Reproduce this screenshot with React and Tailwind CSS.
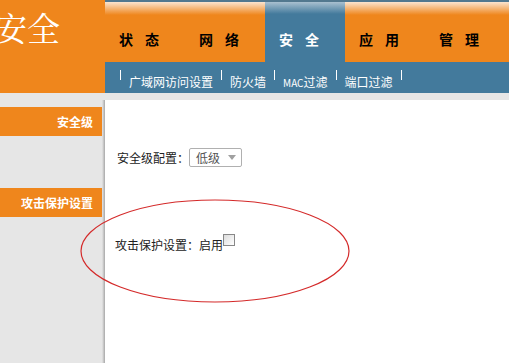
import React from "react";

const tabs = ["状态", "网络", "安全", "应用", "管理"];
const subs = ["广域网访问设置", "防火墙", "MAC过滤", "端口过滤"];

function Tab({ label, active }) {
  return (
    <div
      className={
        "w-[80px] h-full flex items-start justify-center pt-[27px] text-[14px] font-bold tracking-[12px] " +
        (active
          ? "bg-[linear-gradient(to_bottom,#a9c0d0,#437a9c_12px)] text-white"
          : "bg-[linear-gradient(to_bottom,#fbe4cf,#ef861c_13px)] text-black")
      }
    >
      {label}
    </div>
  );
}

function SideItem({ label }) {
  return (
    <div className="h-[29px] bg-[#ef861c] text-white text-[12px] font-bold flex items-center justify-end pr-[9px]">
      {label}
    </div>
  );
}

export default function App() {
  return (
    <div
      className="relative w-[509px] h-[363px] overflow-hidden bg-[#e6e6e6] flex flex-col"
      style={{ fontFamily: '"Noto Sans CJK SC", "Noto Sans", sans-serif' }}
    >
      <div className="h-[93px] flex">
        <div className="w-[105px] bg-[#ef861c] overflow-hidden">
          <div className="text-white text-[33px] leading-none mt-[10px] -ml-[6px] whitespace-nowrap" style={{ fontFamily: '"Noto Serif CJK SC", "Noto Sans CJK SC", serif' }}>
            安全
          </div>
        </div>
        <div className="flex-1 flex flex-col">
          <div className="h-[62px] flex border-t-2 border-[#52788f] bg-[linear-gradient(to_bottom,#fbe4cf,#ef861c_13px)]">
            {tabs.map((t) => (
              <Tab key={t} label={t} active={t === "安全"} />
            ))}
          </div>
          <div className="h-[31px] bg-[#437a9c] flex items-start pl-[15px] pt-[8px] text-white text-[12px]">
            {subs.map((s) => (
              <div key={s} className="flex items-start">
                <div className="w-px h-[10px] bg-white" />
                <span className="px-[8px] mt-[4px] leading-[16px]">
                  {s === "MAC过滤" ? (
                    <>
                      <span className="text-[10px]">MAC</span>过滤
                    </>
                  ) : (
                    s
                  )}
                </span>
              </div>
            ))}
            <div className="w-px h-[10px] bg-white" />
          </div>
        </div>
      </div>
      <div className="flex-1 flex pt-[7px]">
        <div className="w-[102px] flex flex-col">
          <div className="h-[7px]" />
          <SideItem label="安全级" />
          <div className="h-[52px]" />
          <SideItem label="攻击保护设置" />
        </div>
        <div className="w-[3px] bg-[linear-gradient(to_right,#e6e6e6,#a8a8a8)]" />
        <div className="flex-1 bg-white text-[12px] text-[#222]">
          <div className="flex items-center mt-[48px] ml-[12px]">
            <span>安全级配置：</span>
            <div className="w-[53px] h-[19px] border border-[#b0b0b0] rounded-[2px] flex items-center justify-between pl-[6px] pr-[5px] text-[#555]">
              <span>低级</span>
              <svg width="8" height="5" viewBox="0 0 8 5">
                <path d="M0 0 L8 0 L4 5 Z" fill="#a0a0a0" />
              </svg>
            </div>
          </div>
          <div className="flex items-start mt-[67px] ml-[10px]">
            <span className="mt-[2px]">攻击保护设置：启用</span>
            <div className="w-[12px] h-[12px] border border-[#888] bg-[linear-gradient(to_bottom_right,#dcdcdc,#ffffff)]" />
          </div>
        </div>
      </div>
      <svg className="absolute left-0 top-0 pointer-events-none" width="509" height="363">
        <ellipse cx="215" cy="251" rx="134" ry="51" fill="none" stroke="#d42a2a" strokeWidth="1.2" />
      </svg>
    </div>
  );
}
